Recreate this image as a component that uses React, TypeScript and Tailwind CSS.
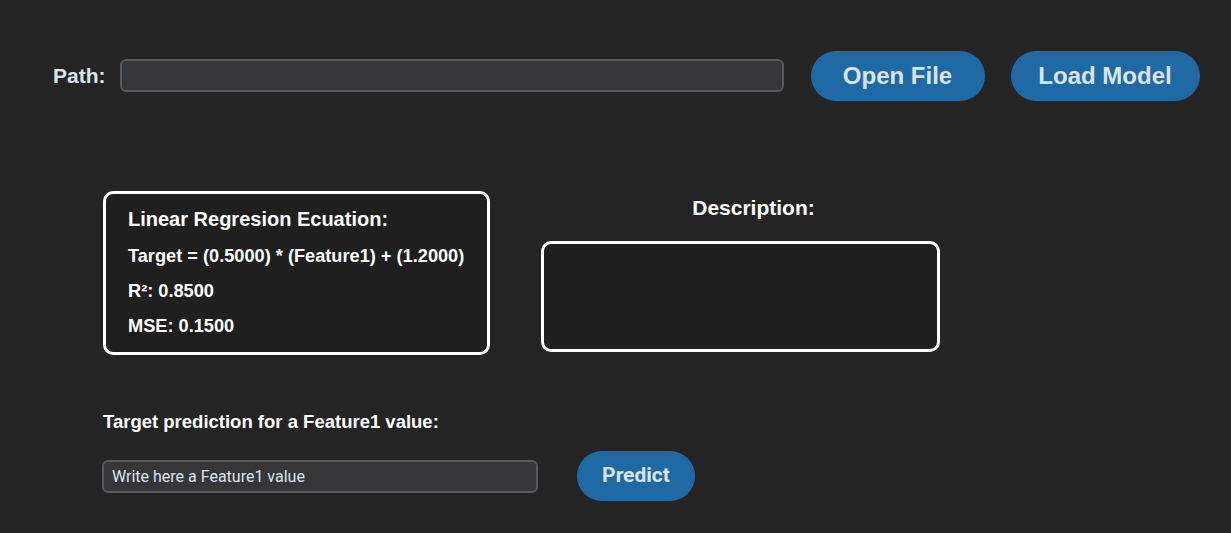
import React from "react";

export default function App() {
  const arial = { fontFamily: '"Liberation Sans", Arial, sans-serif' };
  return (
    <div className="w-full h-[533px] bg-[#242424] overflow-hidden" style={arial}>
      {/* Top row */}
      <div className="flex items-center pt-[51px] pl-[53px] h-[100px]">
        <span className="text-[21px] font-bold text-[#dce4ee] leading-none">Path:</span>
        <input
          className="ml-[14px] w-[664px] h-[33px] bg-[#343638] border-2 border-[#565b5e] rounded-[6px] outline-none px-2 text-[#dce4ee]"
        />
        <button className="ml-[27px] w-[174px] h-[50px] rounded-full bg-[#1f6aa5] text-[#dce4ee] text-[24px] font-bold">
          Open File
        </button>
        <button className="ml-[26px] w-[189px] h-[50px] rounded-full bg-[#1f6aa5] text-[#dce4ee] text-[24px] font-bold">
          Load Model
        </button>
      </div>

      {/* Middle row */}
      <div className="flex items-start mt-[91px] pl-[103px]">
        <div className="w-[387px] h-[164px] border-[3px] border-white rounded-[10px] bg-[#1f1f1f] pl-[22px] pt-[13px] text-white font-bold">
          <div className="text-[20px] leading-[24px]">Linear Regresion Ecuation:</div>
          <div className="text-[18.2px] leading-[22px] mt-[14px]">Target = (0.5000) * (Feature1) + (1.2000)</div>
          <div className="text-[18.2px] leading-[22px] mt-[13px]">R²: 0.8500</div>
          <div className="text-[18.2px] leading-[22px] mt-[13px]">MSE: 0.1500</div>
        </div>
        <div className="ml-[51px] flex flex-col">
          <div className="w-[399px] text-center pl-[26px] mt-[4px] text-[21px] leading-[26px] font-bold text-white">
            Description:
          </div>
          <div className="mt-[20px] w-[399px] h-[111px] border-[3px] border-white rounded-[10px] bg-[#1f1f1f]" />
        </div>
      </div>

      {/* Bottom */}
      <div className="pl-[103px] mt-[56px]">
        <div className="text-[18.5px] leading-[22px] font-bold text-white">Target prediction for a Feature1 value:</div>
        <div className="flex items-center mt-[18px] -ml-[1px]">
          <input
            placeholder="Write here a Feature1 value"
            className="w-[436px] h-[33px] bg-[#343638] border-2 border-[#565b5e] rounded-[6px] outline-none px-[8px] text-[16px] text-[#dce4ee] placeholder:text-[#dce4ee]"
            style={{ fontFamily: 'Roboto, "Liberation Sans", sans-serif' }}
          />
          <button
            className="ml-[39px] w-[118px] h-[50px] rounded-full bg-[#1f6aa5] text-[#dce4ee] text-[21px] font-bold"
            style={{ fontFamily: 'Roboto, "Liberation Sans", sans-serif' }}
          >
            Predict
          </button>
        </div>
      </div>
    </div>
  );
}
